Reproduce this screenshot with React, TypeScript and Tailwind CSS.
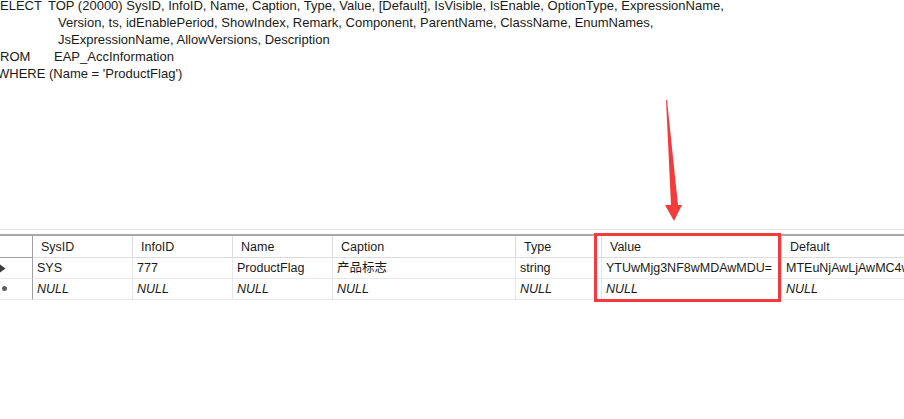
const SQL_LINES: { kw: string; text: string; kwClass: string }[] = [
  { kw: 'ELECT', text: 'TOP (20000) SysID, InfoID, Name, Caption, Type, Value, [Default], IsVisible, IsEnable, OptionType, ExpressionName,', kwClass: 'w-[48px]' },
  { kw: '', text: 'Version, ts, idEnablePeriod, ShowIndex, Remark, Component, ParentName, ClassName, EnumNames,', kwClass: 'w-[58px]' },
  { kw: '', text: 'JsExpressionName, AllowVersions, Description', kwClass: 'w-[58px]' },
  { kw: 'ROM', text: 'EAP_AccInformation', kwClass: 'w-[54px]' },
  { kw: 'WHERE', text: "(Name = 'ProductFlag')", kwClass: 'w-[52px] -ml-[3px]' },
]

const COLS = [
  { label: 'SysID', w: 'w-[100px]' },
  { label: 'InfoID', w: 'w-[100px]' },
  { label: 'Name', w: 'w-[100px]' },
  { label: 'Caption', w: 'w-[183px]' },
  { label: 'Type', w: 'w-[86px]' },
  { label: 'Value', w: 'w-[180px]' },
  { label: 'Default', w: 'w-[200px]' },
]

const ROW = ['SYS', '777', 'ProductFlag', '产品标志', 'string', 'YTUwMjg3NF8wMDAwMDU=', 'MTEuNjAwLjAwMC4wMDA=']

const font = "font-['Liberation_Sans','Noto_Sans_CJK_SC',sans-serif]"

export default function App() {
  return (
    <div className={`relative w-[904px] h-[419px] overflow-hidden bg-white text-[#1a1a1a] ${font}`}>
      {/* ── query text ── */}
      <div className="-mt-[3px] text-[13px] leading-[17px] whitespace-nowrap">
        {SQL_LINES.map((l, i) => (
          <div key={i} className="flex">
            <span className={`${l.kwClass} shrink-0`}>{l.kw}</span>
            <span>{l.text}</span>
          </div>
        ))}
      </div>

      {/* ── results grid ── */}
      <div className="absolute left-0 top-[229px] w-full text-[12.5px]">
        <div className="h-px bg-[#e3e3e3]" />
        <div className="h-[4px]" />
        <div className="h-[2px] bg-[#a8a8a8]" />

        {/* header */}
        <div className="flex h-[22px]">
          <div className="w-[33px] shrink-0 border-r border-b border-r-[#a0a0a0] border-b-[#a0a0a0]" />
          {COLS.map((c) => (
            <div key={c.label} className={`${c.w} shrink-0 border-r border-b border-[#dcdcdc] pl-[8px] pt-px flex items-center`}>
              {c.label}
            </div>
          ))}
        </div>

        {/* row 1 */}
        <div className="flex h-[21px]">
          <div className="w-[33px] shrink-0 border-r border-b border-r-[#a0a0a0] border-b-[#e8e8e8] relative">
            <svg className="absolute left-0 top-[5px]" width="8" height="11" viewBox="0 0 8 11">
              <polygon points="-2,0 5.5,5.5 -2,11" fill="#3c3c3c" />
            </svg>
          </div>
          {COLS.map((c, i) => (
            <div key={c.label} className={`${c.w} shrink-0 border-r border-b border-[#e8e8e8] pl-[4px] flex items-center overflow-hidden whitespace-nowrap`}>
              {ROW[i]}
            </div>
          ))}
        </div>

        {/* new row */}
        <div className="flex h-[21px]">
          <div className="w-[33px] shrink-0 border-r border-b border-r-[#a0a0a0] border-b-[#e8e8e8] relative">
            <div className="absolute left-[2px] top-[7px] w-[5px] h-[5px] rounded-full bg-[#606060]" />
          </div>
          {COLS.map((c) => (
            <div key={c.label} className={`${c.w} shrink-0 border-r border-b border-[#e8e8e8] pl-[4px] flex items-center italic`}>
              NULL
            </div>
          ))}
        </div>
      </div>

      {/* ── annotation: red box ── */}
      <div className="absolute left-[594px] top-[233px] w-[187px] h-[69px] border-[3px] border-[#f23c3c]" />

      {/* ── annotation: arrow ── */}
      <svg className="absolute left-0 top-0" width="904" height="419" viewBox="0 0 904 419">
        <polygon points="666,100 667,100 678,205 682,205 674,221 665,205 671,205" fill="#f23c3c" />
      </svg>
    </div>
  )
}
